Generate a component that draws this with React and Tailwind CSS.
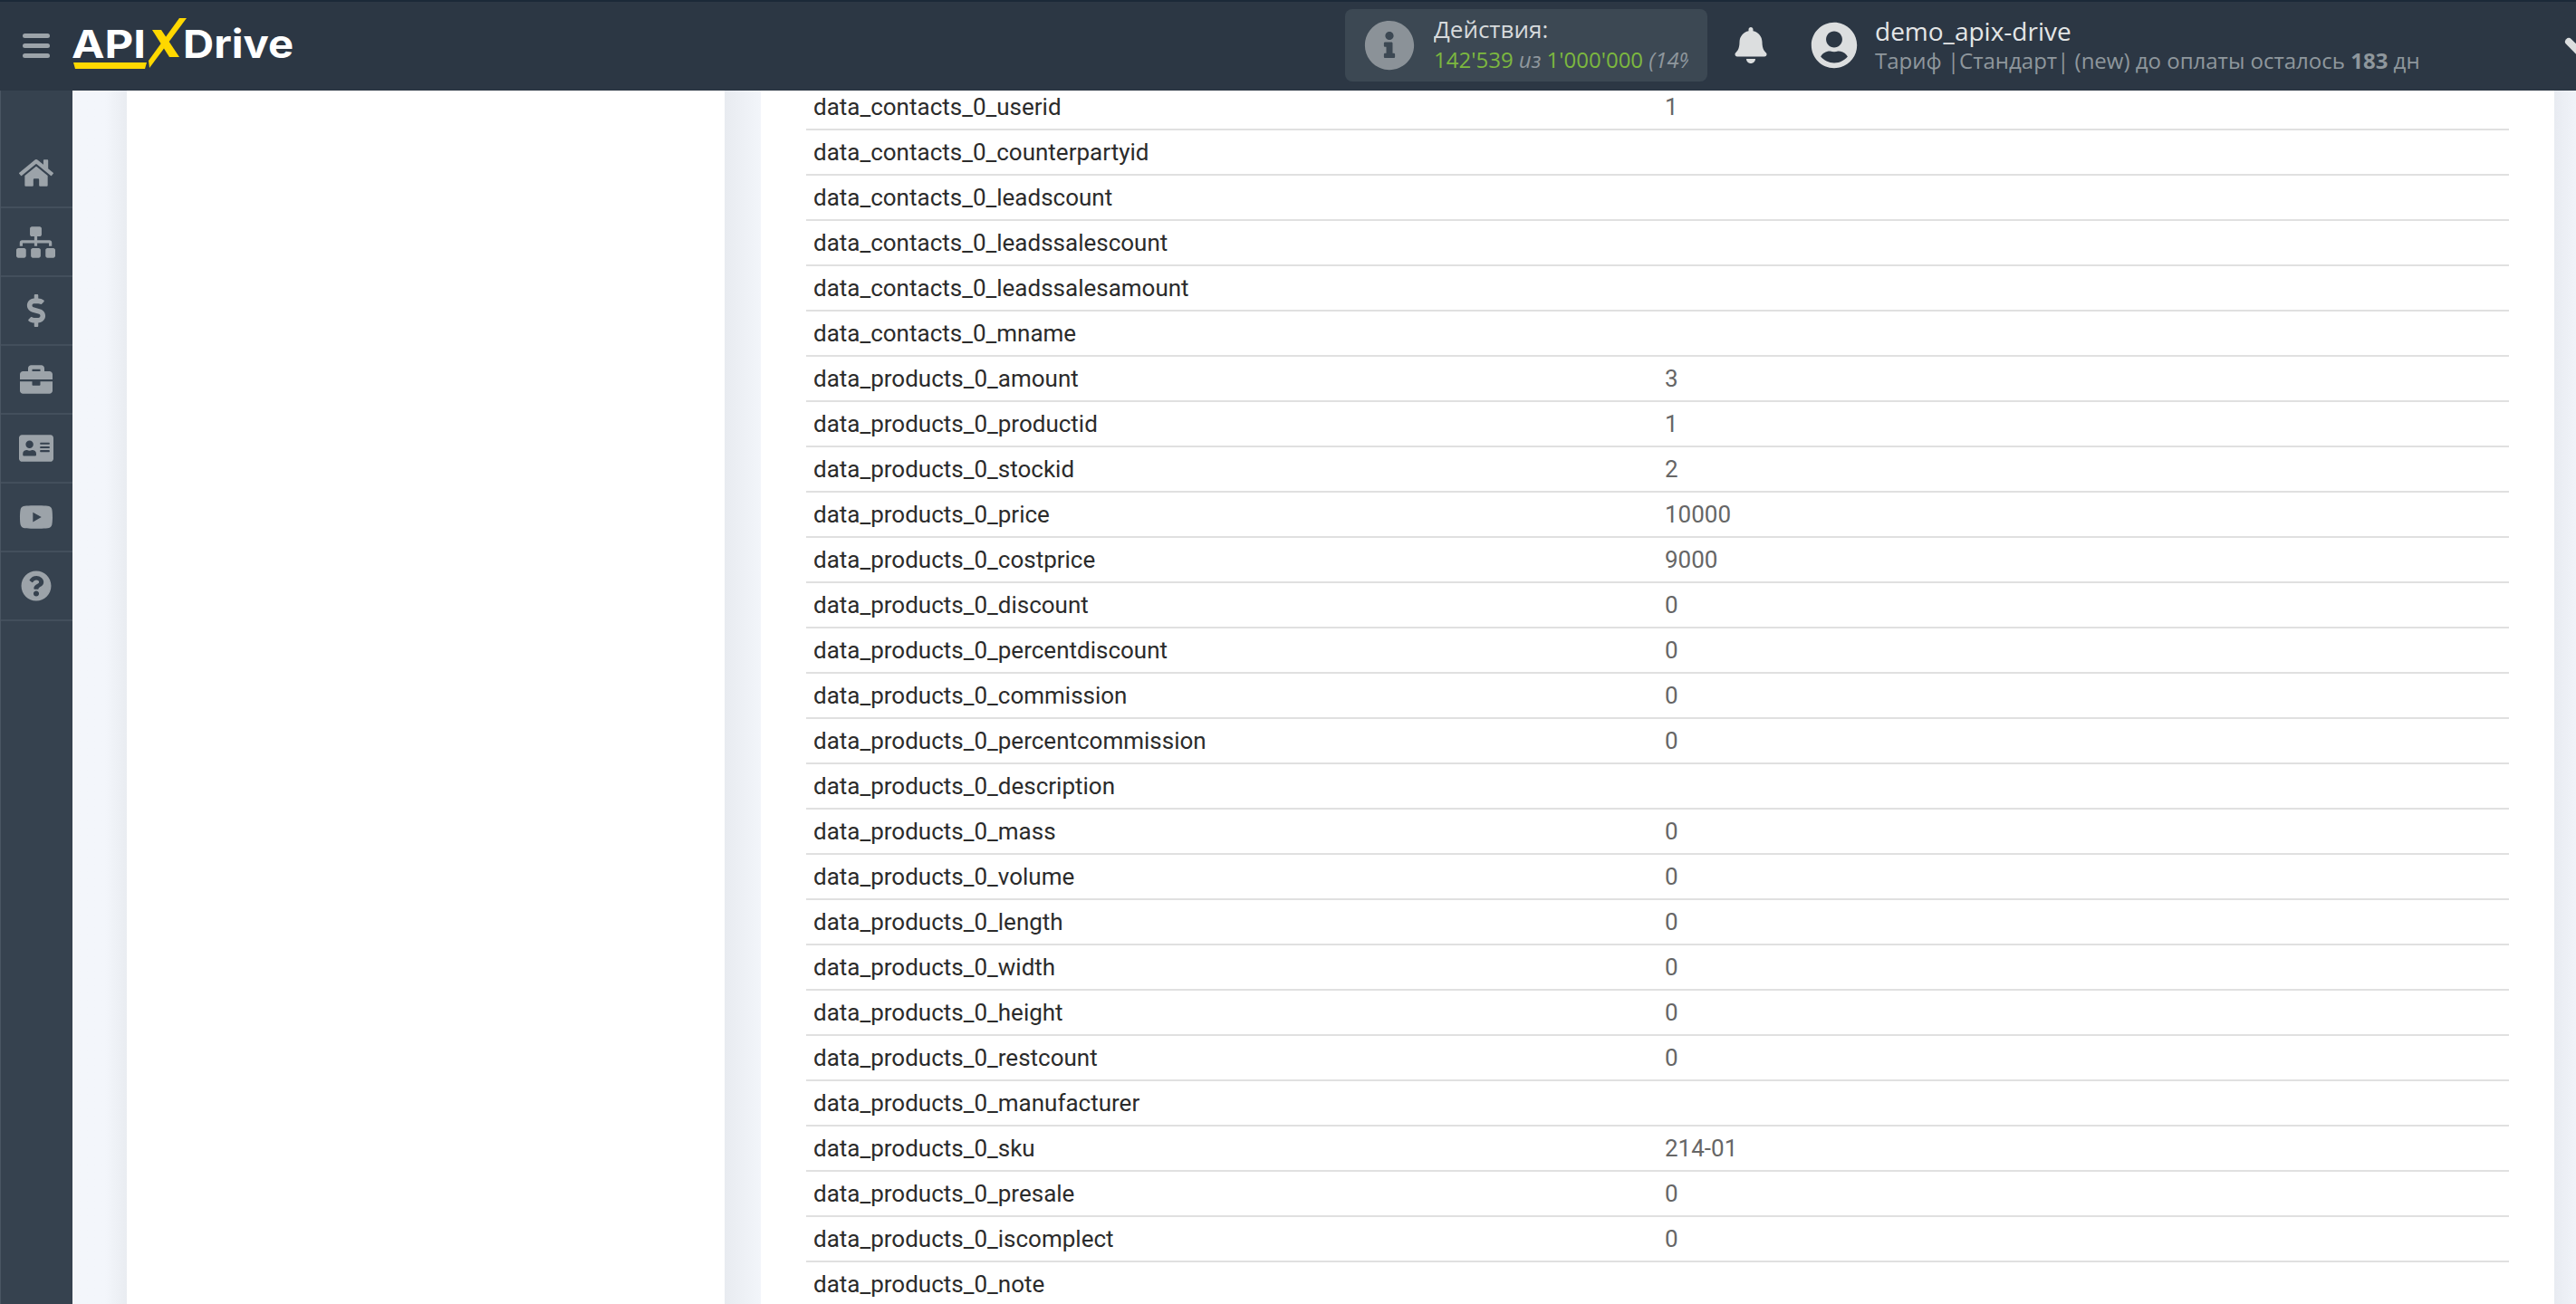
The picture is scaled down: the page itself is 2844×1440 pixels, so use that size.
import React from 'react';
import {
  FaHome,
  FaSitemap,
  FaDollarSign,
  FaBriefcase,
  FaAddressCard,
  FaYoutube,
  FaQuestionCircle,
  FaBell,
  FaUserCircle,
  FaInfoCircle,
} from 'react-icons/fa';

const navItems = [
  { Icon: FaHome, size: 'text-[38px]' },
  { Icon: FaSitemap, size: 'text-[43px]' },
  { Icon: FaDollarSign, size: 'text-[36px]' },
  { Icon: FaBriefcase, size: 'text-[36px]' },
  { Icon: FaAddressCard, size: 'text-[38px]' },
  { Icon: FaYoutube, size: 'text-[38px]' },
  { Icon: FaQuestionCircle, size: 'text-[34px]' },
];

const rows = [
  ['data_contacts_0_userid', '1'],
  ['data_contacts_0_counterpartyid', ''],
  ['data_contacts_0_leadscount', ''],
  ['data_contacts_0_leadssalescount', ''],
  ['data_contacts_0_leadssalesamount', ''],
  ['data_contacts_0_mname', ''],
  ['data_products_0_amount', '3'],
  ['data_products_0_productid', '1'],
  ['data_products_0_stockid', '2'],
  ['data_products_0_price', '10000'],
  ['data_products_0_costprice', '9000'],
  ['data_products_0_discount', '0'],
  ['data_products_0_percentdiscount', '0'],
  ['data_products_0_commission', '0'],
  ['data_products_0_percentcommission', '0'],
  ['data_products_0_description', ''],
  ['data_products_0_mass', '0'],
  ['data_products_0_volume', '0'],
  ['data_products_0_length', '0'],
  ['data_products_0_width', '0'],
  ['data_products_0_height', '0'],
  ['data_products_0_restcount', '0'],
  ['data_products_0_manufacturer', ''],
  ['data_products_0_sku', '214-01'],
  ['data_products_0_presale', '0'],
  ['data_products_0_iscomplect', '0'],
  ['data_products_0_note', ''],
];

const Logo = () => (
  <div className="ml-[26px] relative h-[60px] w-[244px] shrink-0 font-['Inter',sans-serif] font-bold text-white text-[43px] leading-[60px]">
    <span className="absolute left-[-2px] top-[-2px] origin-left scale-x-[1.14]">API</span>
    <svg className="absolute left-0 top-0" width="244" height="60" viewBox="0 0 244 60">
      <polygon points="0,49 81,49 79,56 2,56" fill="#ffd800" />
      <polygon points="117,0 125,0 84,55 83,47" fill="#ffd800" />
      <polygon points="87,13 97,13 117,43 106,43" fill="#ffd800" />
    </svg>
    <span className="absolute left-[121px] top-[-2px] origin-left scale-x-[1.1]">Drive</span>
  </div>
);

const App = () => {
  return (
    <div className="h-screen w-full flex flex-col overflow-hidden bg-white font-['Roboto',sans-serif]">
      {/* Top bar */}
      <header className="h-[100px] shrink-0 flex items-center bg-[#2c3744] border-t-2 border-[#1b2938] pb-[2px] relative z-10 font-['Open_Sans',sans-serif]">
        <div className="flex flex-col gap-[6px] ml-[25px] w-[30px] shrink-0">
          <span className="h-[5px] rounded-sm bg-[#9ca3a9]"></span>
          <span className="h-[5px] rounded-sm bg-[#9ca3a9]"></span>
          <span className="h-[5px] rounded-sm bg-[#9ca3a9]"></span>
        </div>
        <Logo />

        <div className="ml-[1160px] w-[400px] h-[80px] shrink-0 rounded-lg bg-[#3c4853] flex items-center pl-[21px] pr-[21px]">
          <FaInfoCircle className="text-[56px] text-[#8b9298] shrink-0" />
          <div className="ml-[21px] -mt-[3px] overflow-hidden whitespace-nowrap">
            <div className="text-[26px] leading-[34px] text-[#d7dadc]">Действия:</div>
            <div className="text-[24px] leading-[34px] text-[#7cb83f]">
              142'539 <i className="text-[#8f979d]">из</i> 1'000'000 <i className="text-[#8f979d]">(14%)</i>
            </div>
          </div>
        </div>

        <FaBell className="ml-[28px] text-[40px] text-[#dcdedf] shrink-0" />

        <FaUserCircle className="ml-[46px] text-[52px] text-[#dcdedf] shrink-0" />

        <div className="ml-[19px] -mt-[2px] whitespace-nowrap">
          <div className="text-[28px] leading-[36px] text-[#e4e6e7]">demo_apix-drive</div>
          <div className="text-[24px] leading-[30px] text-[#8f979d]">
            Тариф |Стандарт| (new) до оплаты осталось <b>183</b> дн
          </div>
        </div>

        {/* user menu chevron, cut off by the window edge */}
        <svg className="absolute left-[2828px] top-[36px]" width="16" height="30" viewBox="0 0 16 30">
          <line x1="8" y1="8" x2="21" y2="21" stroke="#dcdedf" strokeWidth="8" strokeLinecap="round" />
        </svg>
      </header>

      <div className="flex flex-1 min-h-0">
        {/* Sidebar */}
        <aside className="w-[80px] shrink-0 bg-[#36424f] border-l border-[#4a5562] pt-[54px]">
          {navItems.map(({ Icon, size }, index) => (
            <div
              key={index}
              className="h-[76px] flex items-center justify-center border-b-2 border-[#434f5c] pr-[2px] text-[#9ca3a9]"
            >
              <Icon className={size} />
            </div>
          ))}
        </aside>

        {/* Left gutter + empty card */}
        <div className="w-[60px] shrink-0 bg-gradient-to-r from-[#f3f6fb] from-60% to-[#e9ecf1]"></div>
        <div className="w-[660px] shrink-0 bg-white"></div>
        <div className="w-[40px] shrink-0 bg-gradient-to-r from-[#e8ebf0] to-[#f2f5fa]"></div>

        {/* Data card */}
        <main className="w-[1980px] shrink-0 bg-white pl-[50px] pr-[50px] overflow-hidden">
          <div className="-mt-[6px]">
            {rows.map(([name, value]) => (
              <div
                key={name}
                className="h-[50px] flex items-center border-b-2 border-[#e0e0e0] pl-[8px] text-[26px]"
              >
                <div className="w-[940px] shrink-0 text-[#2b2b2b]">{name}</div>
                <div className="text-[#666666]">{value}</div>
              </div>
            ))}
          </div>
        </main>

        <div className="flex-1 bg-gradient-to-r from-[#e8ebf1] to-[#f0f3f9]"></div>
      </div>
    </div>
  );
};

export default App;
